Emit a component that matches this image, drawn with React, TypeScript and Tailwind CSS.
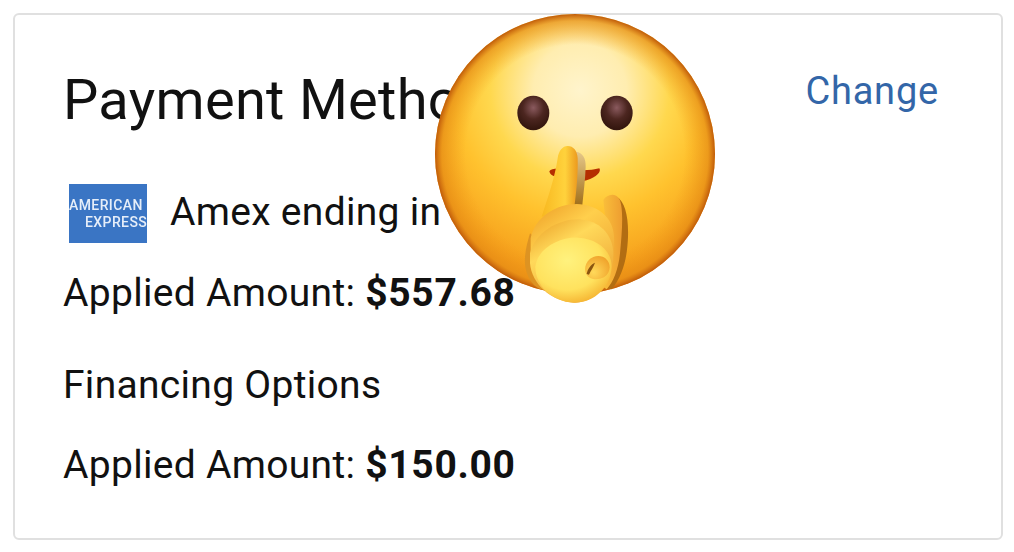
import React from "react";

function ShushEmoji() {
  return (
    <svg viewBox="0 0 930 930" className="absolute left-[420px] top-0 w-[310px] h-[310px]">
      <defs>
        <radialGradient id="face" cx="480" cy="270" r="560" gradientUnits="userSpaceOnUse">
          <stop offset="0" stopColor="#fff4cc" />
          <stop offset="0.25" stopColor="#ffedb0" />
          <stop offset="0.48" stopColor="#ffd84e" />
          <stop offset="0.68" stopColor="#ffc22e" />
          <stop offset="1" stopColor="#f59c1a" />
        </radialGradient>
        <radialGradient id="rim" cx="465" cy="462" r="420" gradientUnits="userSpaceOnUse">
          <stop offset="0.78" stopColor="#f09a18" stopOpacity="0" />
          <stop offset="0.95" stopColor="#e48a14" stopOpacity="0.65" />
          <stop offset="1" stopColor="#bf5a0a" stopOpacity="1" />
        </radialGradient>
        <radialGradient id="eye" cx="0.5" cy="0.35" r="0.6">
          <stop offset="0" stopColor="#8a5a5e" />
          <stop offset="0.55" stopColor="#4c2620" />
          <stop offset="1" stopColor="#35170f" />
        </radialGradient>
        <linearGradient id="finger" x1="0" y1="0" x2="1" y2="0">
          <stop offset="0" stopColor="#f8b820" />
          <stop offset="0.65" stopColor="#ffd23c" />
          <stop offset="1" stopColor="#ec9a1e" />
        </linearGradient>
        <linearGradient id="pinky" x1="0" y1="0" x2="1" y2="0">
          <stop offset="0" stopColor="#ffd040" />
          <stop offset="1" stopColor="#ee9d30" />
        </linearGradient>
        <linearGradient id="backShade" x1="0" y1="0" x2="0" y2="1">
          <stop offset="0" stopColor="#e6c88a" />
          <stop offset="1" stopColor="#9c6a14" />
        </linearGradient>
        <linearGradient id="knuckle1" x1="0.2" y1="0" x2="0.8" y2="1">
          <stop offset="0" stopColor="#f0a62c" />
          <stop offset="0.3" stopColor="#ffcf4c" />
          <stop offset="1" stopColor="#e8962a" />
        </linearGradient>
        <linearGradient id="knuckle2" x1="0.2" y1="0" x2="0.8" y2="1">
          <stop offset="0" stopColor="#eea82e" />
          <stop offset="0.3" stopColor="#ffd95a" />
          <stop offset="1" stopColor="#ea9a2c" />
        </linearGradient>
        <radialGradient id="palm" cx="0.42" cy="0.35" r="0.75">
          <stop offset="0" stopColor="#fff27e" />
          <stop offset="0.6" stopColor="#ffe25e" />
          <stop offset="1" stopColor="#f2a624" />
        </radialGradient>
        <radialGradient id="curl" cx="0.35" cy="0.7" r="0.8">
          <stop offset="0" stopColor="#ffd95a" />
          <stop offset="1" stopColor="#ef9f28" />
        </radialGradient>
      </defs>

      <circle cx="465" cy="462" r="420" fill="url(#face)" />
      <circle cx="465" cy="462" r="420" fill="url(#rim)" />

      <ellipse cx="340" cy="339" rx="48" ry="52" fill="url(#eye)" />
      <ellipse cx="590" cy="339" rx="48" ry="52" fill="url(#eye)" />

      <path d="M388 514 C395 502 420 504 465 510 C495 512 520 510 538 505 C545 515 530 532 500 541 C470 550 445 548 420 536 C402 530 390 525 388 514 Z" fill="#b52e00" />

      <path d="M468 455 C488 458 498 475 497 500 C496 540 490 580 486 625 L455 625 L462 470 Z" fill="url(#backShade)" />
      <path d="M443 438 C460 438 472 452 473 475 C474 520 470 570 462 630 L365 650 C385 590 405 530 413 475 C416 452 428 438 443 438 Z" fill="url(#finger)" />

      <path d="M590 590 C615 605 626 650 624 710 C622 770 610 825 575 868 L540 860 L590 700 Z" fill="#b26d12" />
      <path d="M550 600 C560 584 585 576 598 597 C612 625 606 700 600 760 C595 810 580 845 560 868 L520 840 L560 700 Z" fill="url(#pinky)" />

      <path d="M330 700 C318 740 305 790 325 830 C340 860 355 865 370 870 L400 760 Z" fill="#dd9322" />
      <path d="M332 715 C345 650 410 612 470 612 C530 614 580 650 582 710 C586 790 570 870 470 905 C400 900 340 850 332 780 Z" fill="url(#knuckle1)" />
      <path d="M330 760 C345 695 420 655 480 658 C535 662 578 700 580 760 C582 830 540 905 465 908 C390 905 335 850 330 790 Z" fill="url(#knuckle2)" />
      <path d="M346 800 C352 745 420 710 475 713 C530 716 575 750 575 800 C572 860 525 908 460 908 C395 905 345 855 346 800 Z" fill="url(#palm)" />
      <path d="M496 815 C490 785 520 760 548 770 C572 780 578 815 552 832 C530 842 503 840 496 815 Z" fill="url(#curl)" />
      <path d="M500 822 C503 806 512 794 525 788 C521 800 513 811 507 824 Z" fill="#8a5510" />
    </svg>
  );
}

function AmexLogo() {
  return (
    <div className="w-[78px] h-[59px] bg-[#3a75c4] flex flex-col justify-center overflow-hidden text-[#e6eef9] font-medium leading-[17px] text-[14px] tracking-[0.4px] blur-[0.5px]">
      <div className="whitespace-nowrap">AMERICAN</div>
      <div className="pl-[16px] whitespace-nowrap">EXPRESS</div>
    </div>
  );
}

export default function App() {
  return (
    <div className="relative w-[1014px] h-[552px] bg-white p-[13px] font-['Roboto',sans-serif] text-[#111111] overflow-hidden">
      <div className="h-[527px] w-[990px] border-2 border-[#e0e0e0] rounded-[6px] pl-[48px] pr-[62px] pt-[50px]">
        <div className="flex justify-between items-start">
          <h2 className="text-[56px] tracking-[0.3px] leading-[70px] font-normal whitespace-nowrap">Payment Method</h2>
          <a className="text-[38px] tracking-[0.8px] leading-[54px] text-[#3366a8] -mt-[1px]">Change</a>
        </div>
        <div className="flex items-start gap-[23px] mt-[49px] pl-[6px]">
          <AmexLogo />
          <span className="text-[39px] tracking-[0.3px] leading-[56px]">Amex ending in 1005</span>
        </div>
        <p className="text-[39px] tracking-[0.3px] leading-[56px] mt-[22px]">
          Applied Amount: <b className="font-bold tracking-[0.7px]">$557.68</b>
        </p>
        <p className="text-[39px] tracking-[0.3px] leading-[56px] mt-[36px]">Financing Options</p>
        <p className="text-[39px] tracking-[0.3px] leading-[56px] mt-[24px]">
          Applied Amount: <b className="font-bold tracking-[0.7px]">$150.00</b>
        </p>
      </div>
      <ShushEmoji />
    </div>
  );
}
